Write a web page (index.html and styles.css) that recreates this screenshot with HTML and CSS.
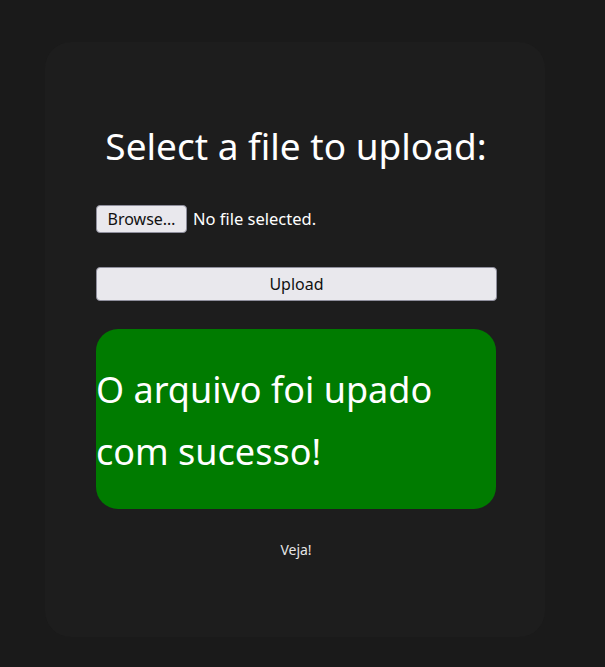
FILE: index.html
```html
<!DOCTYPE html>
<html>
<head>
<meta charset="utf-8">
<link rel="stylesheet" href="styles.css">
</head>
<body>
<div class="card">
  <h1 class="title">Select a file to upload:</h1>
  <div class="file-row">
    <button class="browse">Browse…</button>
    <span class="file-label">No file selected.</span>
  </div>
  <button class="upload">Upload</button>
  <div class="success">O arquivo foi upado com sucesso!</div>
  <a class="veja">Veja!</a>
</div>
</body>
</html>
```
FILE: styles.css
```css
html, body {
  margin: 0;
  padding: 0;
  background: #1a1a1a;
  font-family: "Noto Sans", sans-serif;
  color: #fff;
}
.card {
  box-sizing: border-box;
  margin: 42px 0 0 45px;
  width: 500px;
  height: 595px;
  background: #1d1d1d;
  border-radius: 26px;
  padding: 0 49px 0 51px;
  display: flex;
  flex-direction: column;
}
.title {
  margin: 78px 0 0;
  font-size: 37px;
  font-weight: 400;
  line-height: 52px;
  text-align: center;
  white-space: nowrap;
}
.file-row {
  margin-top: 33px;
  display: flex;
  align-items: center;
  gap: 6px;
  height: 27px;
}
.browse, .upload {
  font-family: "Noto Sans", sans-serif;
  font-size: 16px;
  color: #111;
  background: #e9e8ed;
  border: 1px solid #8f8f9d;
  border-radius: 4px;
  padding: 0 6px;
}
.browse {
  height: 28px;
  width: 91px;
}
.file-label {
  font-size: 16.5px;
  color: #fff;
}
.upload {
  margin-top: 35px;
  height: 34px;
  width: 401px;
}
.success {
  margin-top: 28px;
  width: 400px;
  height: 180px;
  box-sizing: border-box;
  background: #007b00;
  border-radius: 22px;
  font-size: 36px;
  line-height: 62px;
  padding-top: 30px;
}
.veja {
  margin-top: 31px;
  align-self: center;
  font-size: 14px;
  color: #e6e6e6;
}
```
